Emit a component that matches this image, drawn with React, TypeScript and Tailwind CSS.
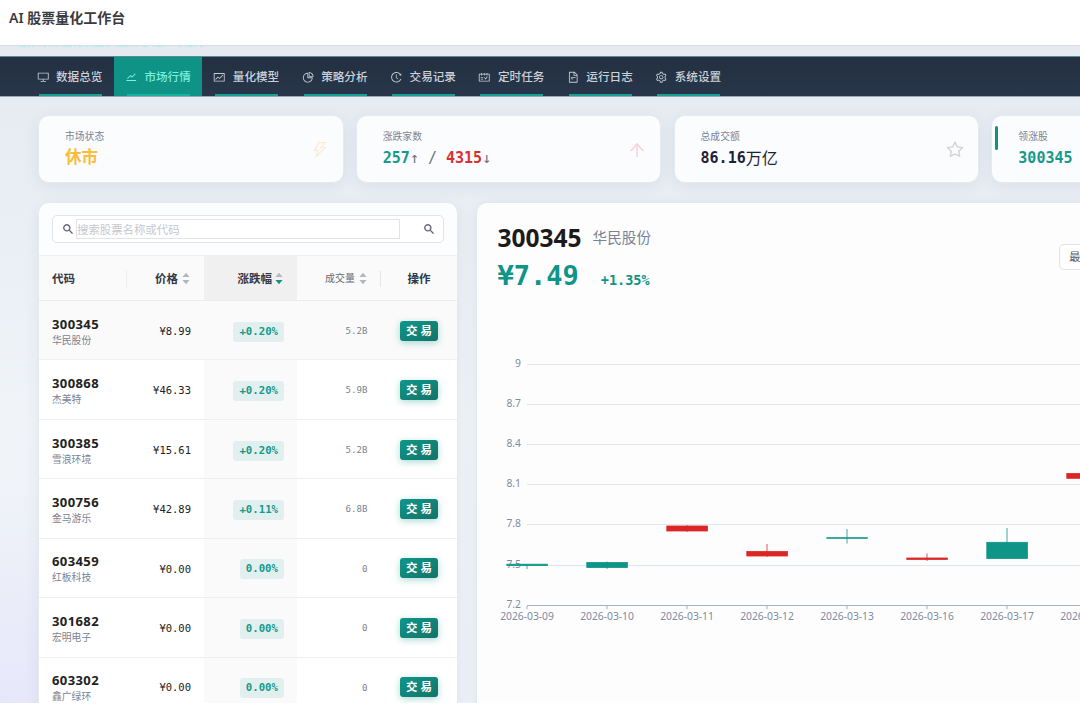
import React, { useState } from 'react';
import clsx from 'clsx';
import type { IconType } from 'react-icons';
import {
    AiFillCaretDown,
    AiFillCaretUp,
    AiOutlineArrowUp,
    AiOutlineDesktop,
    AiOutlineFileText,
    AiOutlineFund,
    AiOutlineHistory,
    AiOutlinePieChart,
    AiOutlineSchedule,
    AiOutlineSearch,
    AiOutlineSetting,
    AiOutlineStar,
    AiOutlineStock,
    AiOutlineThunderbolt,
} from 'react-icons/ai';

interface NavItem {
    name: string;
    icon: IconType;
}

const navItems: NavItem[] = [
    { name: '数据总览', icon: AiOutlineDesktop },
    { name: '市场行情', icon: AiOutlineStock },
    { name: '量化模型', icon: AiOutlineFund },
    { name: '策略分析', icon: AiOutlinePieChart },
    { name: '交易记录', icon: AiOutlineHistory },
    { name: '定时任务', icon: AiOutlineSchedule },
    { name: '运行日志', icon: AiOutlineFileText },
    { name: '系统设置', icon: AiOutlineSetting },
];

const stocks = [
    { code: '300345', name: '华民股份', price: '8.99', change: '+0.20%', volume: '5.2B' },
    { code: '300868', name: '杰美特', price: '46.33', change: '+0.20%', volume: '5.9B' },
    { code: '300385', name: '雪浪环境', price: '15.61', change: '+0.20%', volume: '5.2B' },
    { code: '300756', name: '金马游乐', price: '42.89', change: '+0.11%', volume: '6.8B' },
    { code: '603459', name: '红板科技', price: '0.00', change: '0.00%', volume: '0' },
    { code: '301682', name: '宏明电子', price: '0.00', change: '0.00%', volume: '0' },
    { code: '603302', name: '鑫广绿环', price: '0.00', change: '0.00%', volume: '0' },
];

// top / bottom are the candle body, high / low the wick, all in chart pixels
const candles = [
    { date: '2026-03-09', up: true, top: 214.2, bottom: 215.6, high: 214, low: 219 },
    { date: '2026-03-10', up: true, top: 212.5, bottom: 217.5, high: 211.5, low: 219 },
    { date: '2026-03-11', up: false, top: 176, bottom: 181, high: 175, low: 182 },
    { date: '2026-03-12', up: false, top: 201.5, bottom: 206, high: 194, low: 207 },
    { date: '2026-03-13', up: true, top: 187.7, bottom: 188.3, high: 179, low: 193.5 },
    { date: '2026-03-16', up: false, top: 208, bottom: 209.4, high: 203.5, low: 211 },
    { date: '2026-03-17', up: true, top: 192.3, bottom: 208.5, high: 178, low: 209 },
    { date: '2026-03-18', up: false, top: 123.5, bottom: 128.3, high: 123, low: 129 },
];

const ticks = ['9', '8.7', '8.4', '8.1', '7.8', '7.5', '7.2'];

const Navigation: React.FC = () => {
    const [active, setActive] = useState('市场行情');

    return (
        <nav className="flex h-[41px] shrink-0 border-t border-b border-t-[#5c8b96] border-b-[#9ba6b5] bg-linear-to-b from-[#233040] to-[#28364b] pl-[25.5px]">
            {navItems.map(({ name, icon: Icon }) => (
                <button
                    key={name}
                    onClick={() => setActive(name)}
                    className={clsx(
                        'flex w-[88.4px] shrink-0 flex-col pr-3 pl-[11px]',
                        active === name ? 'bg-[#0f9387] text-[#7af0dc]' : 'text-[#cbd1da]'
                    )}
                >
                    <span className="flex w-full flex-1 items-center gap-[7px] pt-[3px] whitespace-nowrap">
                        <Icon className={clsx('size-[12.5px] shrink-0', active === name ? 'text-[#7af0dc]' : 'text-[#c3cad4]')} />
                        <span className="text-[11.6px] font-medium">{name}</span>
                    </span>
                    <span className={clsx('ml-0.5 h-0.5 w-[63px]', active === name ? 'bg-[#13b39f]' : 'bg-[#17a093]')} />
                </button>
            ))}
        </nav>
    );
};

interface StatCardProps {
    label: string;
    icon?: React.ReactNode;
    accent?: boolean;
    children: React.ReactNode;
}

const StatCard: React.FC<StatCardProps> = ({ label, icon, accent, children }) => (
    <div className="relative flex h-[68px] w-[305.6px] shrink-0 items-center justify-between rounded-[11px] border border-[#e3ebf1] bg-[#fbfcfe] pt-px pr-[13px] pl-[26px] shadow-[0_4px_16px_rgba(30,50,80,0.07)]">
        {accent && <span className="absolute top-2.5 left-[3px] h-6 w-[3px] rounded-full bg-[#0f9387]" />}
        <div className="flex flex-col">
            <span className="h-4 text-[9.8px] leading-4 text-[#7b8393]">{label}</span>
            <div className="flex h-[26px] items-center pt-0.5 whitespace-pre font-['DejaVu_Sans_Mono','Noto_Sans_CJK_SC',monospace] text-[15px] font-bold">
                {children}
            </div>
        </div>
        {icon}
    </div>
);

const Sorter: React.FC<{ desc?: boolean }> = ({ desc }) => (
    <span className="flex flex-col text-[10px] text-[#b4b7bc]">
        <AiFillCaretUp />
        <AiFillCaretDown className={clsx('-mt-[3px]', desc && 'text-[#0f9387]')} />
    </span>
);

const StockTable: React.FC = () => (
    <div className="text-[11.5px]">
        <div className="grid h-[45px] grid-cols-[88px_77px_93px_84px_1fr] border-b border-[#ececec] bg-[#fafafa] pt-px font-semibold text-[#2f3849]">
            <div className="flex items-center justify-between pl-[13px]">
                代码
                <i className="h-[18px] w-px bg-[#eeeeee]" />
            </div>
            <div className="flex items-center justify-end gap-[3px] pr-[13px]">
                价格
                <Sorter />
            </div>
            <div className="-mt-px flex items-center justify-end gap-[2px] bg-[#f0f0f0] pt-px pr-[13px]">
                涨跌幅
                <Sorter desc />
            </div>
            <div className="flex items-center justify-end gap-[3px]">
                <span className="text-[10px] font-normal text-[#666d79]">成交量</span>
                <Sorter />
                <i className="ml-[9px] h-4 w-px bg-[#e6e6e6]" />
            </div>
            <div className="flex items-center justify-center">操作</div>
        </div>
        {stocks.map((stock, index) => (
            <div
                key={stock.code}
                className={clsx(
                    'grid h-[59.45px] grid-cols-[88px_77px_93px_84px_1fr] border-b border-[#efefef]',
                    index === 0 ? 'bg-[#fafafa]' : 'bg-white'
                )}
            >
                <div className="flex flex-col justify-center pt-[5px] pl-[13px] whitespace-nowrap">
                    <span className="text-[13px] leading-[15px] font-bold tracking-[0.4px] text-[#222222]">{stock.code}</span>
                    <span className="text-[9.8px] leading-[17px] text-[#7b8393]">{stock.name}</span>
                </div>
                <div className="flex items-center justify-end pt-[3px] pr-[13px] font-['DejaVu_Sans_Mono','Noto_Sans_CJK_SC',monospace] text-[10.5px] text-[#222222]">
                    ¥{stock.price}
                </div>
                <div className="flex items-center justify-end bg-[#fafafa] pt-[3px] pr-[13px] font-['DejaVu_Sans_Mono',monospace]">
                    <span className="flex h-5 items-center rounded-[3px] bg-[#e1f0ef] px-1.5 text-[10.7px] font-bold text-[#17998c]">
                        {stock.change}
                    </span>
                </div>
                <div className="flex items-center justify-end pt-[3px] pr-[13.5px] font-['DejaVu_Sans_Mono',monospace] text-[9.1px] text-[#7b8393]">
                    {stock.volume}
                </div>
                <div className="flex items-center justify-center pt-px">
                    <button className="h-5 w-[38px] rounded-[3px] bg-linear-to-br from-[#0f978a] to-[#127369] text-[11.5px] leading-5 font-semibold whitespace-nowrap text-white shadow-[0_2px_7px_rgba(15,148,136,0.35)]">
                        交 易
                    </button>
                </div>
            </div>
        ))}
    </div>
);

const CandleChart: React.FC = () => (
    <svg width="680" height="300" className="block text-[10.3px]" fill="#7f8ba0">
        {ticks.map((tick, i) => {
            const y = Math.floor(14 + i * 40.2) + 0.5;
            return (
                <g key={tick}>
                    <line x1="50" x2="680" y1={y} y2={y} stroke={i === 6 ? '#a4b0c3' : '#e0e6ef'} />
                    <text x="44" y={y + 2.5} textAnchor="end">
                        {tick}
                    </text>
                </g>
            );
        })}
        {candles.map(({ date, up, top, bottom, high, low }, i) => {
            const x = 50 + i * 80;
            const color = up ? '#0f9488' : '#dc2626';
            return (
                <g key={date}>
                    <line x1={x} x2={x} y1="256" y2="259" stroke="#a4b0c3" />
                    <text x={x} y="269.5" textAnchor="middle">
                        {date}
                    </text>
                    <line x1={x} x2={x} y1={high} y2={low} stroke={color} strokeWidth="0.8" />
                    <rect x={x - 20.2} y={top} width="40.6" height={bottom - top} fill={color} stroke={color} strokeWidth="0.8" />
                </g>
            );
        })}
    </svg>
);

const App: React.FC = () => {
    return (
        <div className="flex h-[703px] w-full flex-col overflow-hidden bg-[radial-gradient(ellipse_at_0%_100%,#e7e7fa_0%,transparent_22%),linear-gradient(180deg,#e4e9f1_0%,#e8edf4_22%,#f0f4f8_60%,#eef2f8_100%)] font-['Noto_Sans','Noto_Sans_CJK_SC',sans-serif]">
            <header className="flex h-[46px] shrink-0 items-center border-b border-[#d9dce1] bg-white pb-[9px] pl-[9px] text-sm font-semibold text-[#3a3b3e]">
                <h1>AI 股票量化工作台</h1>
            </header>

            <div className="h-[10px] shrink-0 overflow-hidden pl-4">
                <p className="-mt-[12px] text-[10.6px] leading-4 whitespace-nowrap text-[#a3f3e3]">证券行情 量化模型 实盘策略 指数与任务</p>
            </div>

            <Navigation />

            <main className="flex min-h-0 flex-1 flex-col gap-[19px] pt-[18px] pl-[38px]">
                <section className="flex gap-[12.2px]">
                    <StatCard label="市场状态" icon={<AiOutlineThunderbolt className="size-5 text-[#fdeccf]" />}>
                        <span className="text-[16.5px] text-[#fcbc3c]">休市</span>
                    </StatCard>
                    <StatCard label="涨跌家数" icon={<AiOutlineArrowUp className="size-5 text-[#f8d3d5]" />}>
                        <span className="text-[#17998c]">257</span>
                        <span className="font-normal text-[#6b7280]">↑ / </span>
                        <span className="text-[#dc2f2f]">4315</span>
                        <span className="font-normal text-[#6b7280]">↓</span>
                    </StatCard>
                    <StatCard label="总成交额" icon={<AiOutlineStar className="size-5 text-[#d2d4d8]" />}>
                        <span className="text-[#1c2335]">86.16</span>
                        <span className="text-[16px] font-normal text-[#1c2335]">万亿</span>
                    </StatCard>
                    <StatCard label="领涨股" accent>
                        <span className="text-[#17998c]">300345</span>
                    </StatCard>
                </section>

                <section className="flex min-h-0 flex-1 gap-[18px]">
                    <div className="h-[540px] w-[420px] shrink-0 overflow-hidden rounded-t-[11px] border border-[#e3ebf1] bg-[#fcfdff] shadow-[0_4px_16px_rgba(30,50,80,0.07)]">
                        <div className="h-[53px] border-b border-[#ebeef2] px-[13px] pt-3">
                            <div className="flex h-[28px] items-center rounded-[5px] border border-[#e0e4eb] bg-white px-[8.5px] text-[#505868]">
                                <AiOutlineSearch className="size-3 shrink-0" strokeWidth="30" />
                                <input
                                    placeholder="搜索股票名称或代码"
                                    className="ml-[2.5px] h-5 w-[324px] border border-[#e0e4eb] text-[11.4px] outline-none placeholder:text-[#c6c8cc]"
                                />
                                <AiOutlineSearch className="ml-auto size-3 shrink-0" strokeWidth="30" />
                            </div>
                        </div>
                        <StockTable />
                    </div>

                    <div className="h-[540px] w-[700px] shrink-0 rounded-t-[11px] border border-[#dfe9ef] bg-[#fdfdfe] shadow-[0_4px_16px_rgba(30,50,80,0.07)]">
                        <div className="flex h-[147px] pt-[20px] pl-[20.5px]">
                            <div className="w-[561.5px] whitespace-nowrap">
                                <div className="flex h-[31px] items-center gap-[11px]">
                                    <span className="text-[24.5px] font-bold text-[#1d1a1a]">300345</span>
                                    <span className="-mt-px text-[14.6px] text-[#7b8393]">华民股份</span>
                                </div>
                                <div className="flex h-10 items-baseline gap-[22px] font-['DejaVu_Sans_Mono',monospace] font-bold text-[#0f9488]">
                                    <span className="text-[27px] leading-[43px]">¥7.49</span>
                                    <span className="text-[13.5px]">+1.35%</span>
                                </div>
                            </div>
                            <button className="mt-[21px] h-[26px] w-20 rounded-[5px] border border-[#dfe3ea] bg-white pl-[9px] text-left text-[11.5px] text-[#555a66]">
                                最近一月
                            </button>
                        </div>
                        <CandleChart />
                    </div>
                </section>
            </main>
        </div>
    );
};

export default App;
